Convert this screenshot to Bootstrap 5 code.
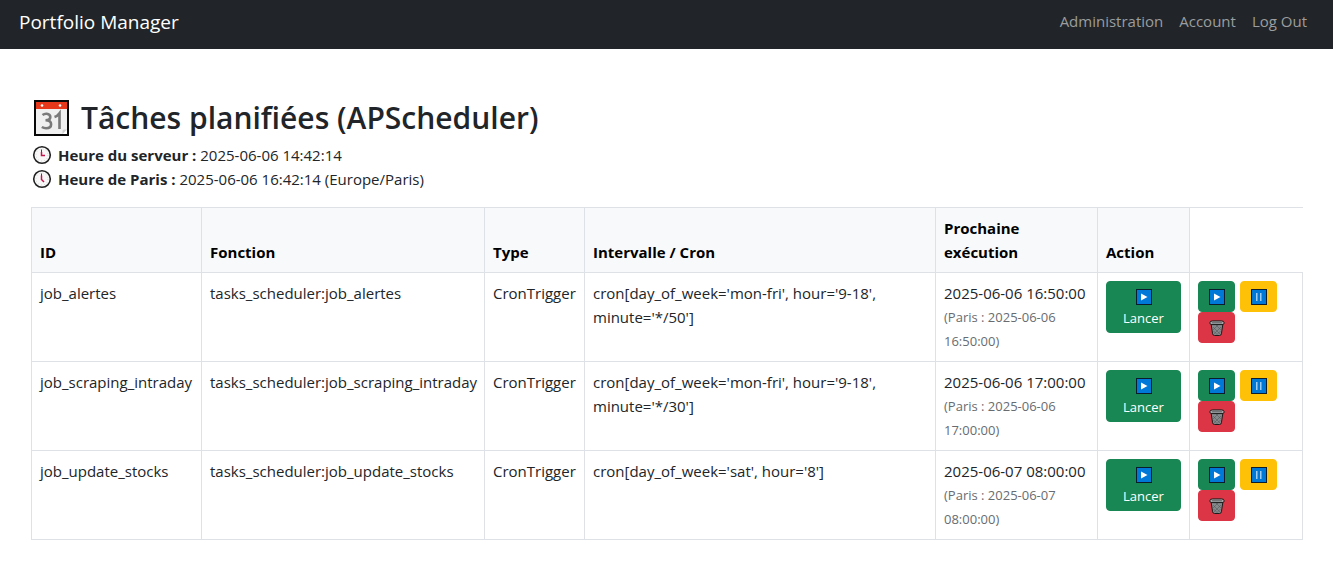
<!DOCTYPE html>
<html lang="fr">
<head>
<meta charset="utf-8">
<meta name="viewport" content="width=device-width, initial-scale=1">
<title>Portfolio Manager</title>
<link href="https://cdn.jsdelivr.net/npm/bootstrap@5.3.0/dist/css/bootstrap.min.css" rel="stylesheet">
<style>
  body { font-family: "Open Sans", "Noto Sans", sans-serif; font-size: 15px; line-height: 24px; color: #212529; }
  .topbar { padding: 0 18px 5px 19px; }
  .topbar .navbar-brand { font-size: 19px; line-height: 28px; padding: 8px 0; }
  .topbar .nav-link { padding: 9px 8px 11px; color: #9b9d9e; }
  .page-body { padding: 48px 30px 0 31px; }
  .page-title { font-size: 30px; line-height: 38px; font-weight: 600; gap: 12px; margin: 2px 0 6px; }
  .page-title svg { margin-left: 3px; }
  .clock-line { gap: 6px; padding-left: 1px; }
  .jobs { table-layout: fixed; margin-top: 16px; border-color: #dee2e6; }
  .jobs th { background: #f8f9fa; color: #000; }
  .jobs td { color: #212529; }
  .jobs thead td { border-width: 0 0 1px; }
  .jobs small { font-size: 13px; color: #686c70; display: block; }
  .c-id { width: 170px; } .c-fn { width: 283px; } .c-type { width: 100px; }
  .c-next { width: 162px; } .c-run { width: 92px; } .c-tools { width: 113px; }
  .jobs .btn { font-size: 13px; line-height: 21px; border-radius: 4px; padding: 5px 8px 3px; }
  .jobs .btn svg { display: block; margin: 2px auto 3px; }
  .tools { column-gap: 5px; }
  .tools .btn { width: 37px; }
</style>
</head>
<body>
<svg class="d-none" aria-hidden="true">
  <symbol id="play" viewBox="0 0 16 16"><path fill="#0b1d2c" d="M0 0h16v16H0z"/><path fill="#0078d7" d="M1 1h14v14H1z"/><path fill="#fff" d="M5 4.500l6.500 3.500L5 11.500z"/></symbol>
  <symbol id="pause" viewBox="0 0 16 16"><path fill="#0b1d2c" d="M0 0h16v16H0z"/><path fill="#0078d7" d="M1 1h14v14H1z"/><path fill="#9fcdf2" d="M5 4h1.500v8H5zM9 4h1.500v8H9z"/></symbol>
  <symbol id="trash" viewBox="0 0 16 16"><path fill="#85898c" stroke="#1c1c1c" d="M2.200 4.500h11.600l-1.400 9.300q-.2 1.700-2 1.700H5.600q-1.800 0-2-1.700z"/><path stroke="#4d5154" stroke-width=".5" fill="none" d="M4 7l7 7M7 5l5.500 5.500M4.500 11l3.500 3.500M12 7l-7 7M9 5l-5.500 5.500M11.500 11L8 14.500"/><path fill="#a4a7a9" stroke="#1c1c1c" d="M.9 2.700Q.9.900 3.500.9h9q2.600 0 2.600 1.800v.4q0 1.500-2 1.500H2.900q-2 0-2-1.500z"/><path fill="#5d6164" d="M3 2.300h10v1H3z"/></symbol>
</svg>

<nav class="navbar navbar-dark bg-dark topbar">
  <a class="navbar-brand m-0" href="#">Portfolio Manager</a>
  <ul class="navbar-nav flex-row">
    <li class="nav-item"><a class="nav-link" href="#">Administration</a></li>
    <li class="nav-item"><a class="nav-link" href="#">Account</a></li>
    <li class="nav-item"><a class="nav-link" href="#">Log Out</a></li>
  </ul>
</nav>

<main class="page-body">
  <h1 class="page-title d-flex align-items-center">
    <svg width="35" height="36" viewBox="0 0 35 36" aria-hidden="true">
      <path fill="#080808" d="M0 0h35v36H0z"/><path fill="#f0f0f0" d="M2 2h31v32H2z"/><path fill="#e8381b" d="M2 2h31v7H2z"/>
      <circle cx="8" cy="5.500" r="1.300" fill="#fff"/><circle cx="26" cy="5.500" r="1.300" fill="#fff"/>
      <path fill="none" stroke="#7a7a7a" stroke-width="2.600" d="M8.500 15q2-1.500 4.200-1.300 3.600.4 3.600 3.300 0 3.200-4.800 3.300 5.600.1 5.600 3.900 0 4-5 4-2.300 0-4.300-1.200M20.500 17q3-1 5-3.800v15.800"/>
      <path fill="#fff" d="M33 29.500V34h-4.500z"/><path fill="#cfcfcf" d="M28.500 34l4.500-4.500h-3q-1.500 0-1.500 1.500z"/>
    </svg>
    <span>Tâches planifiées (APScheduler)</span>
  </h1>
  <div class="d-flex align-items-center clock-line">
    <svg width="20" height="20" viewBox="0 0 20 20" fill="none" aria-hidden="true"><circle cx="10" cy="10" r="8.300" fill="#f8f8f8" stroke="#222" stroke-width="1.600"/><circle cx="10" cy="10" r="6" stroke="#c4c4c4" stroke-width=".8" stroke-dasharray=".8 2.340"/><path stroke="#444" d="M9.500 4.500V10.500"/><path stroke="#c3154b" stroke-width="1.500" d="M9.500 7v3.500H13"/></svg>
    <div><strong>Heure du serveur :</strong> 2025-06-06 14:42:14</div>
  </div>
  <div class="d-flex align-items-center clock-line">
    <svg width="20" height="20" viewBox="0 0 20 20" fill="none" aria-hidden="true"><circle cx="10" cy="10" r="8.300" fill="#f8f8f8" stroke="#222" stroke-width="1.600"/><circle cx="10" cy="10" r="6" stroke="#c4c4c4" stroke-width=".8" stroke-dasharray=".8 2.340"/><path stroke="#444" d="M9.500 4.500V10.500"/><path stroke="#c3154b" stroke-width="1.500" d="M9.500 6.500v4l2.500 2.500"/></svg>
    <div><strong>Heure de Paris :</strong> 2025-06-06 16:42:14 (Europe/Paris)</div>
  </div>

  <table class="table table-bordered jobs mb-0">
    <colgroup><col class="c-id"><col class="c-fn"><col class="c-type"><col><col class="c-next"><col class="c-run"><col class="c-tools"></colgroup>
    <thead>
      <tr><th>ID</th><th>Fonction</th><th>Type</th><th>Intervalle / Cron</th><th>Prochaine exécution</th><th>Action</th><td></td></tr>
    </thead>
    <tbody>
      <tr>
        <td>job_alertes</td><td>tasks_scheduler:job_alertes</td><td>CronTrigger</td>
        <td>cron[day_of_week='mon-fri', hour='9-18', minute='*/50']</td>
        <td>2025-06-06 16:50:00 <small>(Paris : 2025-06-06 16:50:00)</small></td>
        <td><button type="button" class="btn btn-success w-100"><svg width="16" height="16"><use href="#play"/></svg>Lancer</button></td>
        <td><div class="d-flex flex-wrap tools">
          <button type="button" class="btn btn-success" aria-label="Lancer"><svg width="16" height="16"><use href="#play"/></svg></button>
          <button type="button" class="btn btn-warning" aria-label="Pause"><svg width="16" height="16"><use href="#pause"/></svg></button>
          <button type="button" class="btn btn-danger" aria-label="Supprimer"><svg width="16" height="16"><use href="#trash"/></svg></button>
        </div></td>
      </tr>
      <tr>
        <td>job_scraping_intraday</td><td>tasks_scheduler:job_scraping_intraday</td><td>CronTrigger</td>
        <td>cron[day_of_week='mon-fri', hour='9-18', minute='*/30']</td>
        <td>2025-06-06 17:00:00 <small>(Paris : 2025-06-06 17:00:00)</small></td>
        <td><button type="button" class="btn btn-success w-100"><svg width="16" height="16"><use href="#play"/></svg>Lancer</button></td>
        <td><div class="d-flex flex-wrap tools">
          <button type="button" class="btn btn-success" aria-label="Lancer"><svg width="16" height="16"><use href="#play"/></svg></button>
          <button type="button" class="btn btn-warning" aria-label="Pause"><svg width="16" height="16"><use href="#pause"/></svg></button>
          <button type="button" class="btn btn-danger" aria-label="Supprimer"><svg width="16" height="16"><use href="#trash"/></svg></button>
        </div></td>
      </tr>
      <tr>
        <td>job_update_stocks</td><td>tasks_scheduler:job_update_stocks</td><td>CronTrigger</td>
        <td>cron[day_of_week='sat', hour='8']</td>
        <td>2025-06-07 08:00:00 <small>(Paris : 2025-06-07 08:00:00)</small></td>
        <td><button type="button" class="btn btn-success w-100"><svg width="16" height="16"><use href="#play"/></svg>Lancer</button></td>
        <td><div class="d-flex flex-wrap tools">
          <button type="button" class="btn btn-success" aria-label="Lancer"><svg width="16" height="16"><use href="#play"/></svg></button>
          <button type="button" class="btn btn-warning" aria-label="Pause"><svg width="16" height="16"><use href="#pause"/></svg></button>
          <button type="button" class="btn btn-danger" aria-label="Supprimer"><svg width="16" height="16"><use href="#trash"/></svg></button>
        </div></td>
      </tr>
    </tbody>
  </table>
</main>
<script src="https://cdn.jsdelivr.net/npm/bootstrap@5.3.0/dist/js/bootstrap.bundle.min.js"></script>
</body>
</html>
